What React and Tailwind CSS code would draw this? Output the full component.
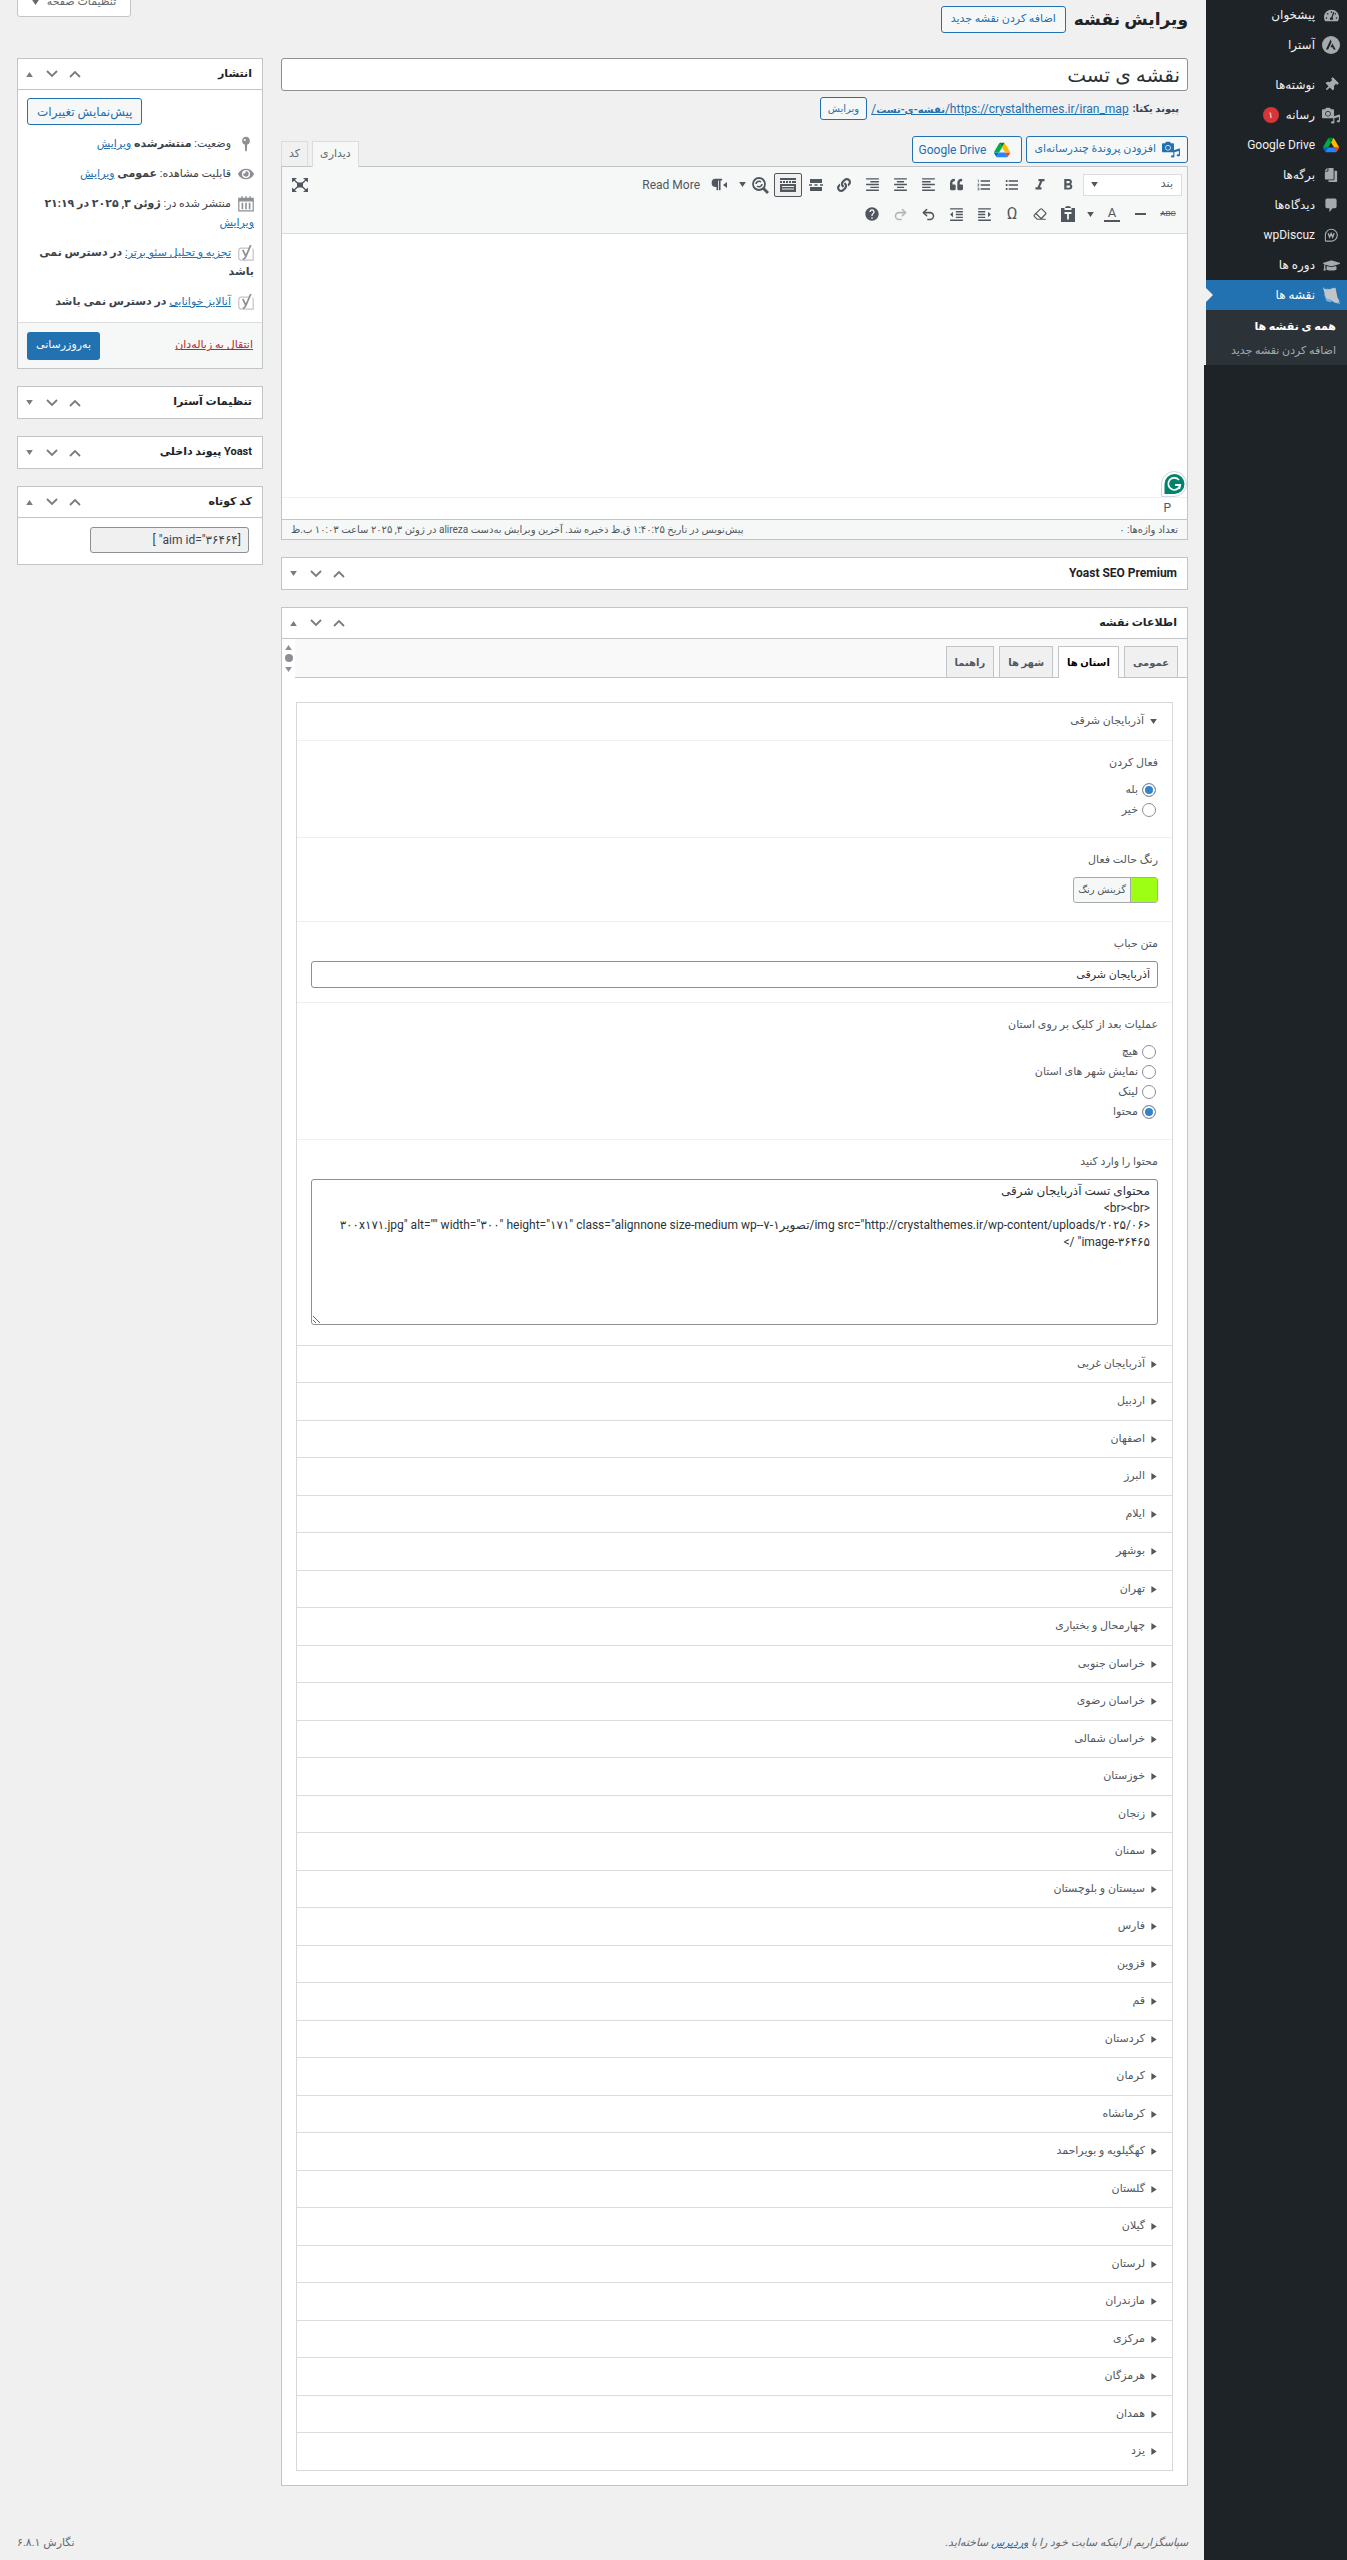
import { FaCamera, FaCopy, FaEye, FaGraduationCap, FaLink, FaMusic, FaParagraph, FaQuoteRight, FaTachometerAlt, FaThumbtack } from "react-icons/fa";
import {
  MdFormatAlignCenter,
  MdFormatAlignLeft,
  MdFormatAlignRight,
  MdFormatBold,
  MdFormatIndentDecrease,
  MdFormatItalic,
  MdFormatListBulleted,
  MdFormatListNumbered,
  MdHelp,
} from "react-icons/md";
import { Eraser, Redo2, Undo2 } from "lucide-react";

const PROVINCES = [
  "آذربایجان غربی",
  "اردبیل",
  "اصفهان",
  "البرز",
  "ایلام",
  "بوشهر",
  "تهران",
  "چهارمحال و بختیاری",
  "خراسان جنوبی",
  "خراسان رضوی",
  "خراسان شمالی",
  "خوزستان",
  "زنجان",
  "سمنان",
  "سیستان و بلوچستان",
  "فارس",
  "قزوین",
  "قم",
  "کردستان",
  "کرمان",
  "کرمانشاه",
  "کهگیلویه و بویراحمد",
  "گلستان",
  "گیلان",
  "لرستان",
  "مازندران",
  "مرکزی",
  "هرمزگان",
  "همدان",
  "یزد",
];

const CONTENT = `محتوای تست آذربایجان شرقی
<br><br>
<img src="http://crystalthemes.ir/wp-content/uploads/۲۰۲۵/۰۶/تصویر۱-۷-۳۰۰x۱۷۱.jpg" alt="" width="۳۰۰" height="۱۷۱" class="alignnone size-medium wp-image-۳۶۴۶۵" />`;

/* Icons */

const AstraIcon = () => (
  <svg viewBox="0 0 20 20" className="h-[18px] w-[18px]">
    <circle cx="10" cy="10" r="10" fill="#a7aaad" />
    <path d="M9.5 4 4.4 15h2.4L10.7 6.600zM11.400 8.200 9.400 12.400h2.300l1.100 2.600h2.500z" fill="#1d2327" />
  </svg>
);

const MediaIcon = () => (
  <span className="relative block h-[17px] w-[18px]">
    <FaCamera className="absolute left-0 top-0 h-3 w-3" />
    <FaMusic className="absolute right-0 bottom-0 h-[10px] w-[9px]" />
  </span>
);

const DriveIcon = () => (
  <svg viewBox="0 0 87 78" className="h-4 w-4">
    <path d="m6.600 66.850 3.850 6.650c.8 1.400 1.950 2.500 3.300 3.300L27.500 53H0c0 1.550.4 3.100 1.200 4.500z" fill="#0066da" />
    <path d="M43.650 25 29.900 1.200c-1.350.8-2.500 1.900-3.300 3.300l-25.400 44A9 9 0 0 0 0 53h27.500z" fill="#00ac47" />
    <path d="M73.550 76.800c1.350-.8 2.500-1.900 3.300-3.300l1.600-2.750 7.650-13.250c.8-1.400 1.200-2.950 1.200-4.500H59.800l5.850 11.500z" fill="#ea4335" />
    <path d="M43.650 25 57.400 1.200C56.050.4 54.500 0 52.900 0H34.400c-1.600 0-3.150.45-4.500 1.200z" fill="#00832d" />
    <path d="M59.800 53H27.500L13.750 76.800c1.350.8 2.900 1.200 4.500 1.200h50.800c1.600 0 3.150-.45 4.500-1.200z" fill="#2684fc" />
    <path d="m73.400 26.500-12.700-22c-.8-1.400-1.950-2.500-3.300-3.300L43.650 25 59.800 53h27.450c0-1.550-.4-3.100-1.200-4.500z" fill="#ffba00" />
  </svg>
);

const CommentIcon = () => (
  <svg viewBox="0 0 20 20" className="h-4 w-4" fill="currentColor">
    <path d="M5 2h10q2 0 2 2v8q0 2-2 2h-3l-4 5v-5H5q-2 0-2-2V4q0-2 2-2z" />
  </svg>
);

const DiscuzIcon = () => (
  <svg viewBox="0 0 20 20" className="h-[14px] w-[14px]" fill="none" stroke="currentColor">
    <path d="M2 19v-9a8.500 8.500 0 1 1 8.500 8.800H2z" strokeWidth="1.600" />
    <path d="M6 7.500 8 13l2.200-5 2.200 5 2-5.500" strokeWidth="2" />
  </svg>
);

const MapIcon = () => (
  <svg viewBox="0 0 20 20" className="h-[18px] w-[18px]">
    <path d="M5 2l4 4 3-5 1 5zM2 9l3 8 5 1 3-4zM11 15l4 4 5 1-1-5z" fill="#72aee6" />
    <path d="M1 1 3 3l4 1 3-1 5-1 1 5 1 5 2 5-2 2-4-1-3-3-5-1-2-5z" fill="#c3c4c7" />
  </svg>
);

const PinIcon = () => (
  <svg viewBox="0 0 20 20" className="h-4 w-4" fill="#8c8f94">
    <path d="M10 1a5 5 0 0 0-1.500 9.700L9 19h2l.5-8.300A5 5 0 0 0 10 1z" />
    <circle cx="8.500" cy="5" r="1.300" fill="#fff" />
  </svg>
);

const CalendarIcon = () => (
  <svg viewBox="0 0 20 20" className="h-4 w-4" fill="none" stroke="#8c8f94" strokeWidth="1.500">
    <path d="M1 3h18v3H1z" fill="#8c8f94" />
    <path d="M1 6v12.500h18V6M5 0v4M10 0v4M15 0v4" />
    <path d="M5.500 8.500v8M10 8.500v8M14.500 8.500v8" strokeWidth="2" />
  </svg>
);

const YoastIcon = () => (
  <svg viewBox="0 0 20 20" className="h-4 w-4" fill="none">
    <path d="M14 4H4Q1 4 1 7v9q0 3 3 3h15V7q0-1.500-1-2.500" stroke="#c3c4c7" strokeWidth="1.500" />
    <path d="M6 6l3.500 7.500M16 0 9.500 15q-1 2.500-3.500 3" stroke="#8c8f94" strokeWidth="2.200" />
  </svg>
);

const GrammarlyIcon = () => (
  <svg viewBox="0 0 26 26" className="h-[26px] w-[26px]">
    <path d="M.5 25.500V13a12.500 12.500 0 1 1 12.500 12.500z" fill="#fff" stroke="#d3d5e3" />
    <path d="M3.500 23V13a10 10 0 1 1 10 10z" fill="#00836c" />
    <path d="M18 9a6 6 0 1 0 1.200 5H14M19.200 14l-1 4" fill="none" stroke="#fff" strokeWidth="1.800" />
  </svg>
);

const Caret = ({ up }) => (
  <svg viewBox="0 0 8 6" className="h-[5px] w-[7px]" fill="currentColor">
    <path d={up ? "M4 0l4 6H0z" : "M0 0h8L4 6z"} />
  </svg>
);

const Chevron = ({ up }) => (
  <svg viewBox="0 0 12 8" className="h-2 w-3" fill="none" stroke="currentColor" strokeWidth="1.800">
    <path d={up ? "M1 7l5-5 5 5" : "M1 1l5 5 5-5"} />
  </svg>
);

const ReadMoreIcon = () => (
  <svg viewBox="0 0 16 16" className="h-4 w-4" fill="currentColor">
    <path d="M2 2h12v4H2zM2 10h12v4H2zM1 7.300h3v1.400H1zM6.500 7.300h3v1.400h-3zM12 7.300h3v1.400h-3z" />
  </svg>
);

const KitchenSinkIcon = () => (
  <svg viewBox="0 0 18 18" className="h-[18px] w-[18px]" fill="currentColor">
    <path d="M1 2h16v2H1zM1 5h2v2H1zM4 5h2v2H4zM7 5h2v2H7zM10 5h2v2h-2zM13 5h4v2h-4zM1 8h16v8H1z" />
    <path d="M3 10.500h12M3 13h12" stroke="#f0f0f1" />
  </svg>
);

const FindIcon = () => (
  <svg viewBox="0 0 18 18" className="h-[18px] w-[18px]" fill="none" stroke="currentColor">
    <circle cx="8" cy="8" r="6" strokeWidth="1.800" />
    <path d="M12 12l5 5" strokeWidth="2.800" />
    <path d="M5 8a3 3 0 0 1 5-2M11 8a3 3 0 0 1-5 2" strokeWidth="1.600" />
  </svg>
);

const FullscreenIcon = () => (
  <svg viewBox="0 0 16 14" className="h-[14px] w-4" fill="currentColor">
    <path d="M5 4.500h6v5H5zM0 0h5L0 4.500zM16 0v4.500L11 0zM0 14V9.500L5 14zM16 14h-5l5-4.500z" />
    <path d="M1 1l5 4.500M15 1l-5 4.500M1 13l5-4.500M15 13l-5-4.500" stroke="currentColor" strokeWidth="1.300" />
  </svg>
);

const PasteIcon = () => (
  <svg viewBox="0 0 16 16" className="h-4 w-4" fill="currentColor">
    <path d="M1 2h4q0-2 3-2t3 2h4v14H1z" />
    <path d="M4.500 3h7M4.500 7h7M8 7v6.500" stroke="#f6f7f7" strokeWidth="1.800" />
  </svg>
);

/* Building blocks */

const MENU = [
  { label: "پیشخوان", icon: <FaTachometerAlt className="h-[15px] w-[15px]" /> },
  { label: "آسترا", icon: <AstraIcon /> },
  null,
  { label: "نوشته‌ها", icon: <FaThumbtack className="h-[14px] w-[14px] rotate-45" /> },
  { label: "رسانه", icon: <MediaIcon />, badge: "۱" },
  { label: "Google Drive", icon: <DriveIcon /> },
  { label: "برگه‌ها", icon: <FaCopy className="h-[14px] w-[14px] -scale-x-100" /> },
  { label: "دیدگاه‌ها", icon: <CommentIcon /> },
  { label: "wpDiscuz", icon: <DiscuzIcon /> },
  { label: "دوره ها", icon: <FaGraduationCap className="h-[17px] w-[17px]" /> },
  { label: "نقشه ها", icon: <MapIcon />, active: true },
];

const Sidebar = () => (
  <aside className="w-[143px] shrink-0 bg-[#1d2327]">
    <nav className="border-l-2 border-[#f0f0f1]">
      {MENU.map((item, i) =>
        item ? (
          <a
            key={item.label}
            href="#"
            className={`relative flex h-[30px] items-center gap-[7px] pr-[7px] text-xs ${
              item.active ? "bg-[#2271b1] text-white" : "text-[#f0f0f1]"
            }`}
          >
            <span className="flex w-[18px] justify-center text-[#a7aaad]">{item.icon}</span>
            {item.label}
            {item.badge && (
              <span className="flex h-4 w-4 items-center justify-center rounded-full bg-[#d63638] text-[9px] text-white">
                {item.badge}
              </span>
            )}
            {item.active && (
              <span className="absolute left-0 top-2 border-y-[7px] border-l-[7px] border-y-transparent border-l-[#f0f0f1]"></span>
            )}
          </a>
        ) : (
          <div key={i} className="h-[10px]"></div>
        )
      )}
      <div className="bg-[#2c3338] pt-[5px] pb-[2px] pr-[11px] text-[11px] leading-[24px]">
        <a href="#" className="block font-bold text-white">
          همه ی نقشه ها
        </a>
        <a href="#" className="block text-[#a7aaad]">
          اضافه کردن نقشه جدید
        </a>
      </div>
    </nav>
  </aside>
);

const PostBox = ({ title, open, children }) => (
  <section className="border border-[#c3c4c7] bg-white">
    <div className={`flex h-[31px] items-center justify-between pr-[10px] pl-2 ${open ? "border-b border-[#c3c4c7]" : ""}`}>
      <h2 className="text-[11px] font-bold text-[#1d2327]">{title}</h2>
      <div className="flex items-center gap-[11px] text-[#787c82]">
        <button aria-label="انتقال به بالا">
          <Chevron up />
        </button>
        <button aria-label="انتقال به پایین">
          <Chevron />
        </button>
        <button aria-label="باز و بسته کردن" className="mr-[2px]">
          <Caret up={open} />
        </button>
      </div>
    </div>
    {children}
  </section>
);

const Link = ({ children }) => (
  <a href="#" className="text-[#2271b1] underline">
    {children}
  </a>
);

const OutlineButton = ({ className, children }) => (
  <button className={`flex items-center rounded-[3px] border border-[#2271b1] bg-[#f6f7f7] text-[#2271b1] ${className}`}>
    {children}
  </button>
);

const PublishRow = ({ icon, children }) => (
  <div className="text-[11px] leading-[19px]">
    <span className="ml-[7px] inline-block h-4 align-middle">{icon}</span>
    {children}
  </div>
);

const PublishBox = () => (
  <PostBox title="انتشار" open>
    <div className="flex justify-end pt-2 pl-[9px]">
      <OutlineButton className="h-[27px] px-[9px] text-xs">پیش‌نمایش تغییرات</OutlineButton>
    </div>
    <div className="flex flex-col gap-[11px] px-2 pt-[9px] pb-[11px]">
      <PublishRow icon={<PinIcon />}>
        وضعیت: <b>منتشرشده</b> <Link>ویرایش</Link>
      </PublishRow>
      <PublishRow icon={<FaEye className="h-4 w-4 text-[#8c8f94]" />}>
        قابلیت مشاهده: <b>عمومی</b> <Link>ویرایش</Link>
      </PublishRow>
      <PublishRow icon={<CalendarIcon />}>
        منتشر شده در: <b>ژوئن ۳, ۲۰۲۵ در ۲۱:۱۹</b> <Link>ویرایش</Link>
      </PublishRow>
      <PublishRow icon={<YoastIcon />}>
        <Link>تجزیه و تحلیل سئو برتر:</Link> <b>در دسترس نمی باشد</b>
      </PublishRow>
      <PublishRow icon={<YoastIcon />}>
        <Link>آنالایز خوانایی</Link> <b>در دسترس نمی باشد</b>
      </PublishRow>
    </div>
    <div className="flex h-[46px] items-center justify-between border-t border-[#dcdcde] bg-[#f6f7f7] px-[9px]">
      <a href="#" className="text-[11px] text-[#b32d2e] underline">
        انتقال به زباله‌دان
      </a>
      <button className="h-7 rounded-[3px] bg-[#2271b1] px-[9px] text-[11px] text-white">به‌روزرسانی</button>
    </div>
  </PostBox>
);

const Tool = ({ label, active, children }) => (
  <button
    aria-label={label}
    className={`flex h-6 w-7 items-center justify-center ${active ? "rounded-[2px] border border-[#50575e] bg-[#f0f0f1]" : ""}`}
  >
    {children}
  </button>
);

const Editor = () => (
  <div>
    <div className="flex items-end justify-between">
      <div className="mb-[3px] flex gap-1">
        <OutlineButton className="h-[27px] gap-[6px] px-[7px] text-[11px]">
          <MediaIcon />
          افزودن پروندهٔ چندرسانه‌ای
        </OutlineButton>
        <OutlineButton className="h-[27px] gap-2 pr-[11px] pl-[6px] text-xs">
          <DriveIcon />
          Google Drive
        </OutlineButton>
      </div>
      <div className="flex gap-1 text-[11px] text-[#646970]">
        <button className="-mb-px h-[26px] border border-b-0 border-[#dcdcde] bg-[#f6f7f7] px-[7px]">دیداری</button>
        <button className="h-[25px] border border-b-0 border-[#dcdcde] bg-[#f0f0f1] px-[7px]">کد</button>
      </div>
    </div>
    <div className="border border-[#c3c4c7] bg-white text-[#50575e]">
      <div className="border-b border-[#dcdcde] bg-[#f6f7f7] pt-1 pr-[5px] pb-[5px]">
        <div className="flex h-[27px] items-center">
          <div className="relative ml-[1px] flex items-center">
            <select aria-label="قالب" className="h-[22px] w-[99px] appearance-none border border-[#dcdcde] bg-white pr-2 text-[11px]">
              <option>بند</option>
            </select>
            <span className="absolute left-2">
              <Caret />
            </span>
          </div>
          <Tool label="ضخیم"><MdFormatBold size={18} /></Tool>
          <Tool label="مورب"><MdFormatItalic size={18} /></Tool>
          <Tool label="فهرست"><MdFormatListBulleted size={16} /></Tool>
          <Tool label="فهرست عددی"><MdFormatListNumbered size={16} /></Tool>
          <Tool label="نقل قول"><FaQuoteRight size={13} className="rotate-180" /></Tool>
          <Tool label="چپ‌چین"><MdFormatAlignLeft size={17} /></Tool>
          <Tool label="وسط‌چین"><MdFormatAlignCenter size={17} /></Tool>
          <Tool label="راست‌چین"><MdFormatAlignRight size={17} /></Tool>
          <Tool label="پیوند"><FaLink size={14} /></Tool>
          <Tool label="ادامه"><ReadMoreIcon /></Tool>
          <Tool label="نوار ابزار" active><KitchenSinkIcon /></Tool>
          <Tool label="جستجو"><FindIcon /></Tool>
          <Caret />
          <button aria-label="راست به چپ" className="mr-3 flex items-center">
            <svg viewBox="0 0 4 6" className="h-[6px] w-1" fill="currentColor"><path d="M4 0v6L0 3z" /></svg>
            <FaParagraph size={13} />
          </button>
          <button className="mr-[10px] text-xs">Read More</button>
          <button aria-label="تمام صفحه" className="mr-auto ml-[10px]">
            <FullscreenIcon />
          </button>
        </div>
        <div className="flex h-[30px] items-center pt-[2px]">
          <Tool label="خط خورده"><s className="text-[8px]">ABC</s></Tool>
          <Tool label="خط افقی"><span className="h-[2px] w-[11px] bg-[#50575e]"></span></Tool>
          <Tool label="رنگ متن"><span className="border-b-2 border-[#50575e] px-1 text-[13px] leading-[14px]">A</span></Tool>
          <span className="flex w-4 justify-center"><Caret /></span>
          <Tool label="چسباندن"><PasteIcon /></Tool>
          <Tool label="پاک کردن"><Eraser size={14} /></Tool>
          <Tool label="نویسه ویژه"><span className="text-base leading-4">Ω</span></Tool>
          <Tool label="کاهش تورفتگی"><MdFormatIndentDecrease size={17} className="-scale-x-100" /></Tool>
          <Tool label="افزایش تورفتگی"><MdFormatIndentDecrease size={17} /></Tool>
          <Tool label="واگرد"><Undo2 size={15} strokeWidth={2.5} /></Tool>
          <Tool label="ازنو"><Redo2 size={15} strokeWidth={2.5} className="opacity-40" /></Tool>
          <Tool label="راهنما"><MdHelp size={16} /></Tool>
        </div>
      </div>
      <div className="flex h-[263px] items-end">
        <GrammarlyIcon />
      </div>
      <div className="h-[22px] border-t border-[#f0f0f1] pr-4 text-xs leading-[20px]">P</div>
      <div className="flex h-5 items-center justify-between border-t border-[#c3c4c7] bg-[#f6f7f7] px-[9px] text-[10px]">
        <span>تعداد واژه‌ها: ۰</span>
        <span>پیش‌نویس در تاریخ ۱:۴۰:۲۵ ق.ظ ذخیره شد. آخرین ویرایش به‌دست alireza در ژوئن ۳, ۲۰۲۵ ساعت ۱۰:۰۳ ب.ظ</span>
      </div>
    </div>
  </div>
);

const Field = ({ label, htmlFor, className, children }) => (
  <div className={`border-t border-[#f0f0f1] px-[14px] pt-3 ${className}`}>
    <label htmlFor={htmlFor} className="mb-[7px] block text-[11px] leading-5">
      {label}
    </label>
    {children}
  </div>
);

const Radio = ({ name, label, checked }) => (
  <label className="flex h-5 items-center gap-1 pr-[2px] text-[11px]">
    <input
      type="radio"
      name={name}
      defaultChecked={checked}
      className="h-[14px] w-[14px] appearance-none rounded-full border border-[#8c8f94] bg-white checked:bg-[#3582c4] checked:shadow-[inset_0_0_0_2px_#fff]"
    />
    {label}
  </label>
);

const TABS = ["عمومی", "استان ها", "شهر ها", "راهنما"];

const MapInfoBox = () => (
  <PostBox title="اطلاعات نقشه" open>
    <div className="flex h-[39px] items-end border-b border-[#c3c4c7] bg-[#f9f9f9] pr-[9px]">
      {TABS.map((tab, i) => (
        <button
          key={tab}
          className={`ml-[5px] border border-b-0 border-[#c3c4c7] px-[8px] text-[10px] font-bold ${
            i === 1 ? "-mb-px h-8 bg-white text-black" : "h-[31px] bg-[#f0f0f1] text-[#50575e]"
          }`}
        >
          {tab}
        </button>
      ))}
      <div className="mr-auto -mb-px flex h-[39px] w-[13px] flex-col items-center justify-around bg-white py-1 text-[#8c8f94]">
        <Caret up />
        <span className="h-2 w-2 rounded-full bg-[#8c8f94]"></span>
        <Caret />
      </div>
    </div>
    <div className="px-[14px] pt-6 pb-[14px] text-[#50575e]">
      <div className="border border-[#d5d9de]">
        <button className="flex h-[37px] w-full items-center gap-[6px] pr-[15px] text-[11px]">
          <Caret />
          آذربایجان شرقی
        </button>
        <Field label="فعال کردن" className="pb-[17px]">
          <Radio name="enabled" label="بله" checked />
          <Radio name="enabled" label="خیر" />
        </Field>
        <Field label="رنگ حالت فعال" htmlFor="color" className="pb-[18px]">
          <button id="color" className="flex h-[26px] items-stretch overflow-hidden rounded-[3px] border border-[#a7aaad] bg-[#f6f7f7] text-[10px]">
            <span className="w-[27px] border-l border-[#a7aaad] bg-[#9dff13]"></span>
            <span className="px-1 leading-[23px]">گزینش رنگ</span>
          </button>
        </Field>
        <Field label="متن حباب" htmlFor="bubble" className="pb-[14px]">
          <input
            id="bubble"
            defaultValue="آذربایجان شرقی"
            className="block h-[27px] w-full rounded-[3px] border border-[#8c8f94] bg-white px-[7px] text-[11px] text-[#2c3338]"
          />
        </Field>
        <Field label="عملیات بعد از کلیک بر روی استان" className="pb-[17px]">
          <Radio name="action" label="هیچ" />
          <Radio name="action" label="نمایش شهر های استان" />
          <Radio name="action" label="لینک" />
          <Radio name="action" label="محتوا" checked />
        </Field>
        <Field label="محتوا را وارد کنید" htmlFor="content" className="pb-5">
          <textarea
            id="content"
            defaultValue={CONTENT}
            className="block h-[146px] w-full rounded-[3px] border border-[#8c8f94] bg-white px-[7px] py-[3px] text-xs leading-[17px] text-[#2c3338]"
          />
        </Field>
        {PROVINCES.map((name) => (
          <button
            key={name}
            className="flex w-full items-center gap-[6px] border-t border-[#dcdcde] pr-[15px] text-[11px] odd:h-[37px] even:h-[38px]"
          >
            <svg viewBox="0 0 6 8" className="h-[7px] w-[6px]" fill="currentColor"><path d="M0 0v8l6-4z" /></svg>
            {name}
          </button>
        ))}
      </div>
    </div>
  </PostBox>
);

export default function App() {
  return (
    <div
      dir="rtl"
      className="flex min-h-screen overflow-hidden bg-[#f0f0f1] font-['Roboto','DejaVu_Sans',sans-serif] text-[13px] text-[#3c434a]"
    >
      <Sidebar />
      <main className="flex min-w-0 flex-1 flex-col pr-4 pl-[17px]">
        <header className="flex h-[58px] items-start justify-between">
          <div className="flex items-center gap-2 pt-[6px]">
            <h1 className="text-[17px] leading-[27px] font-bold text-[#1d2327]">ویرایش نقشه</h1>
            <OutlineButton className="h-[27px] px-[9px] text-[11px]">اضافه کردن نقشه جدید</OutlineButton>
          </div>
          <button className="-mt-[12px] flex h-[29px] w-[114px] items-center justify-center gap-2 rounded-b-[3px] border border-[#c3c4c7] bg-white text-[11px] text-[#646970]">
            تنظیمات صفحه
            <Caret />
          </button>
        </header>
        <div className="flex items-start gap-[18px]">
          <div className="min-w-0 flex-1">
            <input
              aria-label="عنوان"
              defaultValue="نقشه ی تست"
              className="block h-[33px] w-full rounded-[3px] border border-[#8c8f94] bg-white px-[7px] text-xl text-[#2c3338]"
            />
            <div className="mt-[6px] mb-[16px] flex h-[23px] items-center gap-1 pr-[9px] text-[10px]">
              <b>پیوند یکتا:</b>
              <a href="#" className="text-xs text-[#2271b1] underline">
                https://crystalthemes.ir/iran_map/<b className="text-[10px]">نقشه-ی-تست</b>/
              </a>
              <OutlineButton className="h-[23px] px-[7px] text-[10px]">ویرایش</OutlineButton>
            </div>
            <Editor />
            <div className="mt-[17px] flex flex-col gap-[17px]">
              <PostBox title={<span className="text-xs">Yoast SEO Premium</span>} />
              <MapInfoBox />
            </div>
          </div>
          <div className="flex w-[246px] shrink-0 flex-col gap-[17px]">
            <PublishBox />
            <PostBox title="تنظیمات آسترا" />
            <PostBox title="Yoast پیوند داخلی" />
            <PostBox title="کد کوتاه" open>
              <div className="px-[13px] pt-[9px] pb-[11px]">
                <input
                  aria-label="کد کوتاه"
                  readOnly
                  value={'[aim id="۳۶۴۶۴" ]'}
                  className="block h-[26px] w-[159px] rounded-[3px] border border-[#8c8f94] bg-[#f0f0f1] px-[7px] text-xs"
                />
              </div>
            </PostBox>
          </div>
        </div>
        <footer className="mt-auto flex justify-between pb-[7px] text-[11px] leading-5 text-[#646970]">
          <p className="italic">
            سپاسگزاریم از اینکه سایت خود را با <Link>وردپرس</Link> ساخته‌اید.
          </p>
          <p>نگارش ۶.۸.۱</p>
        </footer>
      </main>
    </div>
  );
}
